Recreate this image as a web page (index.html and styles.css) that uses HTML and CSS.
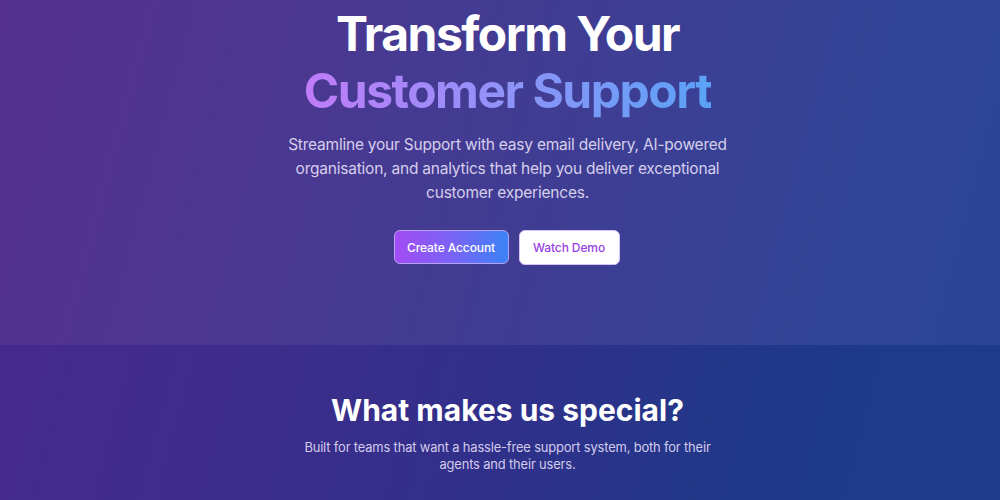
FILE: index.html
```html
<!DOCTYPE html>
<html lang="en">
<head>
<meta charset="utf-8">
<title>Transform Your Customer Support</title>
<link rel="stylesheet" href="styles.css">
</head>
<body>
  <section class="hero">
    <h1 class="hero-title">
      <span class="line">Transform Your</span>
      <span class="line gradient-text">Customer Support</span>
    </h1>
    <p class="hero-lead">Streamline your Support with easy email delivery, AI-powered organisation, and analytics that help you deliver exceptional customer experiences.</p>
    <div class="actions">
      <a class="btn btn-primary" href="#">Create Account</a>
      <a class="btn btn-secondary" href="#">Watch Demo</a>
    </div>
  </section>
  <section class="features">
    <h2 class="features-title">What makes us special?</h2>
    <p class="features-lead">Built for teams that want a hassle-free support system, both for their agents and their users.</p>
  </section>
</body>
</html>
```

FILE: styles.css
```css
* { box-sizing: border-box; }
html, body { margin: 0; padding: 0; }
body {
  font-family: Inter, "Noto Sans", "Liberation Sans", sans-serif;
  color: #fff;
  background: #1e3a8a;
  height: 500px;
  overflow: hidden;
}
.hero {
  height: 345px;
  padding: 5px 0 0 15px;
  display: flex;
  flex-direction: column;
  align-items: center;
  text-align: center;
  background: linear-gradient(105deg, #56318f 0%, #4a3891 30%, #3f3d93 55%, #334497 80%, #2c4596 100%);
}
.hero-title {
  margin: 0;
  font-size: 48px;
  font-weight: 700;
  line-height: 57px;
  letter-spacing: -1.5px;
}
.line { display: block; }
.gradient-text {
  background: linear-gradient(90deg, #c07cf8 0%, #8f93f8 50%, #5aa2f6 100%);
  -webkit-background-clip: text;
  background-clip: text;
  color: transparent;
  width: max-content;
  margin: 0 auto;
}
.hero-lead {
  margin: 14px 0 0;
  max-width: 446px;
  font-size: 15.5px;
  line-height: 24px;
  letter-spacing: -0.22px;
  color: #d6cfec;
}
.actions {
  margin-top: 25px;
  margin-right: 2px;
  display: flex;
  gap: 10px;
}
.btn {
  display: inline-flex;
  align-items: center;
  justify-content: center;
  height: 34px;
  border-radius: 6px;
  font-size: 12px;
  font-weight: 500;
  letter-spacing: -0.1px;
  text-decoration: none;
}
.btn-primary {
  width: 115px;
  color: #fff;
  background: linear-gradient(90deg, #a24cf4 0%, #7a63f5 50%, #3b82f6 100%);
  border: 1px solid #b6a2f2;
}
.btn-secondary {
  width: 101px;
  color: #9a3fe4;
  background: #fff;
  border: 1.5px solid #d9c3f5;
  height: 35px;
}
.features {
  height: 155px;
  padding: 47px 0 0 15px;
  display: flex;
  flex-direction: column;
  align-items: center;
  text-align: center;
  background: linear-gradient(105deg, #452a8d 0%, #3b2d8b 30%, #30308a 50%, #233789 70%, #1e3a8a 85%, #1f3a8a 100%);
}
.features-title {
  margin: 0;
  font-size: 30px;
  font-weight: 700;
  line-height: 36px;
  letter-spacing: 0;
}
.features-lead {
  margin: 11px 0 0;
  max-width: 420px;
  font-size: 12.9px;
  line-height: 17px;
  letter-spacing: -0.15px;
  color: #d2cbec;
}
```
